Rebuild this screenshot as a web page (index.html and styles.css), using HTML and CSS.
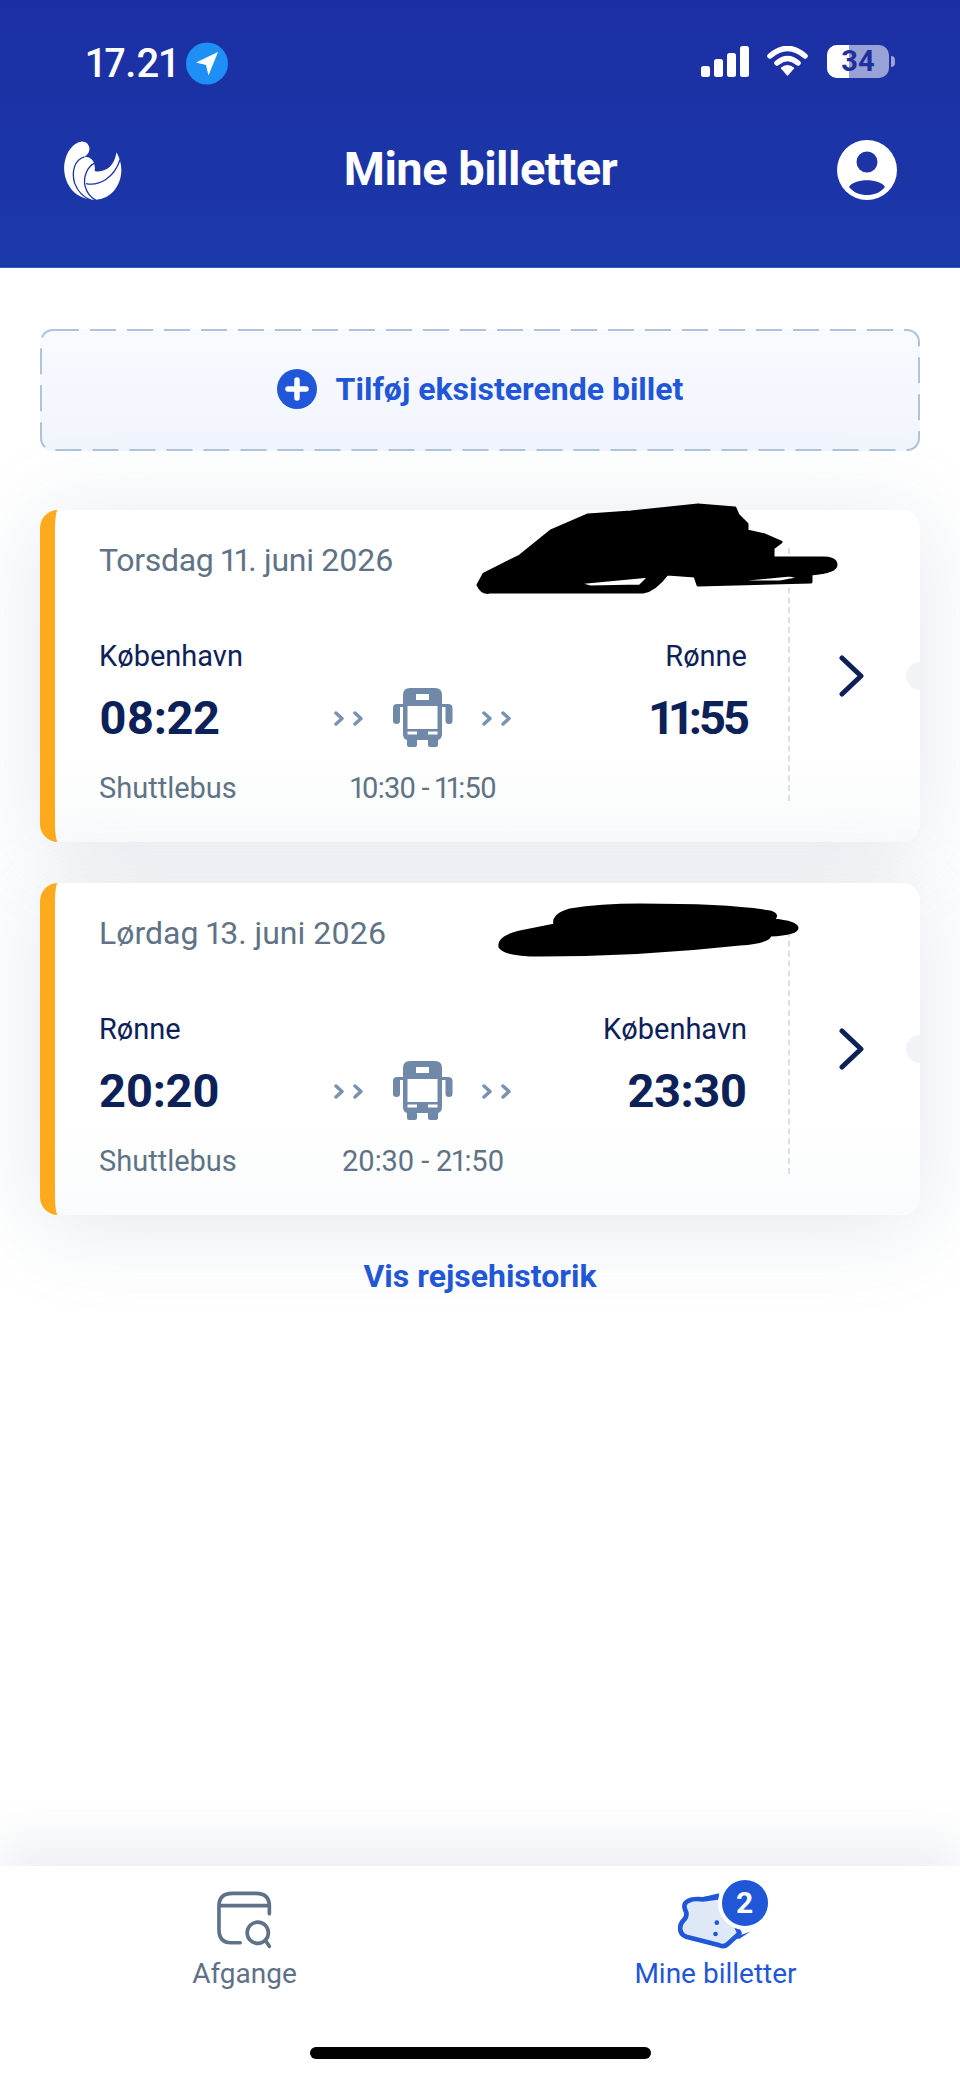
FILE: index.html
```html
<!DOCTYPE html>
<html lang="da">
<head>
  <meta charset="UTF-8">
  <title>Mine billetter</title>
  <link rel="stylesheet" href="styles.css">
</head>
<body>
<div class="app">
  <header class="top">
    <div class="status">
      <div class="clock">
        <span>17.21</span>
        <svg class="loc" viewBox="0 0 42 42"><circle cx="21" cy="21" r="21" fill="#1e90f5"/><path d="M32 9.500 L10 20 L20 22.500 L22.500 33 Z" fill="#fff"/></svg>
      </div>
      <div class="sys">
        <svg class="signal" viewBox="0 0 48 31"><rect x="0" y="20" width="9" height="11" rx="2.500"/><rect x="13" y="13" width="9" height="18" rx="2.500"/><rect x="26" y="7" width="9" height="24" rx="2.500"/><rect x="39" y="0" width="9" height="31" rx="2.500"/></svg>
        <svg class="wifi" viewBox="0 0 41 30"><path d="M3 10 Q20.500 -5 38 10" fill="none" stroke="#fff" stroke-width="5.500" stroke-linecap="round"/><path d="M10 17 Q20.500 8 31 17" fill="none" stroke="#fff" stroke-width="5.500" stroke-linecap="round"/><path d="M13.500 22 Q20.500 16 27.500 22 L20.500 30 Z" fill="#fff"/></svg>
        <div class="batt"><div class="batt-fill"></div><span>34</span></div>
        <div class="batt-nub"></div>
      </div>
    </div>
    <div class="bar">
      <svg class="logo" viewBox="70 55 185 185">
        <path d="M125 60 C145 58 155 78 148 92 C144 100 138 103 135 106 C155 105 170 120 166 150 C195 152 225 140 232 92 C252 125 255 175 222 212 C195 240 150 245 115 222 C80 200 65 150 78 110 C85 85 105 62 125 60 Z" fill="#fff"/>
        <path d="M135 106 C105 115 95 150 105 185 C115 212 135 230 155 237 M166 125 C145 135 130 165 137 195 C142 215 155 230 170 238 M140 187 C180 195 225 170 243 115" fill="none" stroke="#1c34a6" stroke-width="4"/>
      </svg>
      <h1>Mine billetter</h1>
      <svg class="profile" viewBox="0 0 60 60">
        <circle cx="30" cy="30" r="30" fill="#fff"/>
        <circle cx="30" cy="22" r="10.500" fill="#1c34a6"/>
        <path d="M12 47 C17 38 43 38 48 47 C43 53 37 55 30 55 C23 55 17 53 12 47 Z" fill="#1c34a6"/>
      </svg>
    </div>
  </header>

  <main class="content">
    <button class="add">
      <svg class="dashes" viewBox="0 0 880 122"><rect x="1" y="1" width="878" height="120" rx="12"/></svg>
      <svg class="plus" viewBox="0 0 40 40"><circle cx="20" cy="20" r="20" fill="#1f57d8"/><path d="M20 11 V29 M11 20 H29" stroke="#fff" stroke-width="5.500" stroke-linecap="round"/></svg>
      <span>Tilføj eksisterende billet</span>
    </button>

    <article class="ticket">
      <div class="ticket-main">
        <div class="date">Torsdag 11. juni 2026</div>
        <div class="route">
          <div class="place">København</div>
          <div class="place right">Rønne</div>
          <div class="time">08:22</div>
          <div class="trip">
            <svg class="chev" viewBox="0 0 30 15"><path d="M2 2 L8 7.500 L2 13 M21 2 L27 7.500 L21 13"/></svg>
            <svg class="bus" viewBox="0 0 60 60"><use href="#bus-shape"/></svg>
            <svg class="chev" viewBox="0 0 30 15"><path d="M2 2 L8 7.500 L2 13 M21 2 L27 7.500 L21 13"/></svg>
          </div>
          <div class="time right tight">11:55</div>
          <div class="sub">Shuttlebus</div>
          <div class="sub mid tight">10:30 - 11:50</div>
        </div>
      </div>
      <div class="stub">
        <svg class="go" viewBox="0 0 26 42"><path d="M3 3 L22 21 L3 39"/></svg>
      </div>
      <div class="notch"></div>
      <svg class="scribble first" viewBox="470 500 375 100">
        <path fill-rule="evenodd" d="M478 585 Q482 594 490 592 L643 592 Q655 590 667 574 L695 576 L698 585 L811 582 L811 574 Q836 572 836 565 Q836 557 820 558 L773 558 L773 548 L781 542 L765 535 L747 531 L747 524 L738 515 L735 508 L698 505 L631 512 L588 515 L551 531 L520 556 L484 574 Z M576 583 L650 576 L640 586 L590 587 Z M716 582 L790 575 L802 578 L780 582 Z"/>
      </svg>
    </article>

    <article class="ticket">
      <div class="ticket-main">
        <div class="date wide">Lørdag 13. juni 2026</div>
        <div class="route">
          <div class="place">Rønne</div>
          <div class="place right">København</div>
          <div class="time">20:20</div>
          <div class="trip">
            <svg class="chev" viewBox="0 0 30 15"><path d="M2 2 L8 7.500 L2 13 M21 2 L27 7.500 L21 13"/></svg>
            <svg class="bus" viewBox="0 0 60 60"><use href="#bus-shape"/></svg>
            <svg class="chev" viewBox="0 0 30 15"><path d="M2 2 L8 7.500 L2 13 M21 2 L27 7.500 L21 13"/></svg>
          </div>
          <div class="time right">23:30</div>
          <div class="sub">Shuttlebus</div>
          <div class="sub mid">20:30 - 21:50</div>
        </div>
      </div>
      <div class="stub">
        <svg class="go" viewBox="0 0 26 42"><path d="M3 3 L22 21 L3 39"/></svg>
      </div>
      <div class="notch"></div>
      <svg class="scribble second" viewBox="490 893 320 70">
        <path d="M500 947 Q498 937 520 932 L555 925 Q552 915 570 910 Q600 905 640 905 Q730 905 770 912 Q780 915 772 920 Q797 922 797 928 Q797 934 770 935 Q770 942 740 944 Q640 955 540 955 Q505 955 500 947 Z"/>
      </svg>
    </article>

    <a class="history">Vis rejsehistorik</a>
  </main>

  <nav class="tabs">
    <div class="tab-row">
      <div class="tab">
        <svg class="tab-icon" viewBox="70 50 190 190" fill="none" stroke="#5e7187" stroke-width="11" stroke-linecap="round">
          <path d="M240 128 V105 Q240 66 200 66 H128 Q88 66 88 105 V175 Q88 215 125 215 H152 M88 103 H240"/>
          <circle cx="205" cy="185" r="32"/>
          <path d="M228 208 L240 226"/>
        </svg>
        <span>Afgange</span>
      </div>
      <div class="tab active">
        <div class="tab-icon wrap-badge">
          <svg viewBox="50 60 230 180" class="ticket-icon">
            <path d="M88 92 Q100 85 130 88 L190 80 L240 190 L205 222 Q195 232 180 226 L80 200 Q62 194 62 175 Q62 160 75 148 Q85 135 78 122 Q68 100 88 92 Z" fill="#dfe8f6" stroke="#1f57d8" stroke-width="14" stroke-linejoin="round"/>
            <path d="M120 84 L178 70 L178 84 Z M212 206 L272 185 L240 206 Z" fill="#1f57d8"/>
            <circle cx="172" cy="158" r="7" fill="#1f57d8"/><circle cx="168" cy="192" r="7" fill="#1f57d8"/>
          </svg>
          <div class="badge">2</div>
        </div>
        <span>Mine billetter</span>
      </div>
    </div>
    <div class="home"></div>
  </nav>
</div>

<svg class="defs" width="0" height="0">
  <symbol id="bus-shape" viewBox="0 0 60 60">
    <path fill="#7089a9" fill-rule="evenodd" d="M17 0 H42 Q49 0 49 7 V16 H55 Q59.500 16 59.500 20 V33 Q59.500 36 56 36 Q52.500 36 52.500 33 V19 H49 V46 Q49 51 45 52 V57 Q45 59 43 59 H37 Q35 59 35 57 V52 H24 V57 Q24 59 22 59 H16 Q14 59 14 57 V52 Q10 51 10 46 V19 H7 V33 Q7 36 3.500 36 Q0 36 0 33 V20 Q0 16 4 16 H10 V7 Q10 0 17 0 Z M14.500 18 V41 H44.500 V18 Z M23 6 V12 H36 V6 Z M14.500 43.500 V46.500 H24 V43.500 Z M35 43.500 V46.500 H44.500 V43.500 Z"/>
  </symbol>
</svg>
</body>
</html>
```

FILE: styles.css
```css
*{margin: 0;padding: 0;box-sizing: border-box;}
html,body{height: 100%;}
body{font-family: Roboto, "Noto Sans", sans-serif;background: #fff;color: #0d2159;font-variant-numeric: proportional-nums;}
.app{width: 960px;height: 2078px;display: flex;flex-direction: column;overflow: hidden;}
.defs{position: absolute;}

/* blue top */
.top{height: 268px;background: linear-gradient(#1b2fa3, #1b38a9);color: #fff;flex: none;border-bottom: 1px solid #2a62b8;}
.status{height: 139px;display: flex;justify-content: space-between;align-items: flex-start;padding: 42px 65px 0 86px;}
.clock{display: flex;align-items: center;gap: 8px;height: 43px;font-size: 40px;font-weight: 500;}
.loc{width: 42px;height: 43px;}
.sys{display: flex;align-items: center;height: 38px;}
.signal{width: 48px;height: 31px;fill: #fff;margin-right: 18px;}
.wifi{width: 41px;height: 30px;margin-right: 19px;}
.batt{position: relative;width: 62px;height: 33px;border-radius: 10px;background: rgba(255,255,255,.55);overflow: hidden;text-align: center;font-size: 29px;font-weight: 700;line-height: 33px;color: #1f2f9c;}
.batt-fill{position: absolute;left: 0;top: 0;bottom: 0;width: 22px;background: #fff;}
.batt span{position: relative;}
.batt-nub{width: 4px;height: 11px;margin-left: 2px;background: rgba(255,255,255,.55);border-radius: 0 4px 4px 0;}
.bar{display: flex;justify-content: space-between;align-items: center;padding: 0 63px;height: 62px;}
.bar h1{font-size: 47px;font-weight: 700;letter-spacing: -0.5px;margin-bottom: 4px;}
.logo{width: 61px;height: 61px;}
.profile{width: 60px;height: 60px;}

/* list */
.content{flex: 1;padding: 61px 40px 0;display: flex;flex-direction: column;}
.add{position: relative;height: 122px;border: 0;border-radius: 12px;background: linear-gradient(#f8faff, #f1f5fc);display: flex;align-items: center;justify-content: center;gap: 19px;color: #1f57d8;font: 700 32px Roboto, sans-serif;margin-bottom: 59px;padding-bottom: 2px;}
.dashes{position: absolute;left: 0;top: 0;width: 880px;height: 122px;fill: none;stroke: #aec3dc;stroke-width: 2;stroke-dasharray: 26 11;}
.plus{width: 40px;height: 40px;}
.ticket{position: relative;height: 332px;margin-bottom: 41px;background: linear-gradient(#fff 70%, #fafbfc);border-left: 15px solid #fdab1c;border-radius: 18px;display: flex;box-shadow: 0 10px 90px rgba(115,135,165,.2);}
.ticket-main{width: 733px;padding: 30px 0 0 44px;}
.date{font-size: 32px;letter-spacing: -0.3px;color: #5f7386;height: 98px;line-height: 40px;}
.date.wide{letter-spacing: 0;}
.route{width: 648px;display: grid;grid-template-columns: 1fr auto 1fr;align-items: start;}
.place{font-size: 29px;height: 36px;line-height: 36px;}
.place.right{grid-column: 3;text-align: right;}
.time{font-size: 47px;font-weight: 700;letter-spacing: -0.5px;height: 96px;line-height: 88px;}
.time.right{text-align: right;}
.time.tight{letter-spacing: -3px;}
.trip{display: flex;align-items: center;gap: 29px;height: 88px;}
.chev{width: 30px;height: 15px;fill: none;stroke: #7a93b2;stroke-width: 3.500;stroke-linecap: round;stroke-linejoin: round;}
.bus{width: 60px;height: 60px;}
.sub{font-size: 29px;color: #5f7386;height: 36px;line-height: 36px;}
.sub.mid{text-align: center;letter-spacing: -0.2px;}
.sub.mid.tight{letter-spacing: -0.9px;}
.stub{flex: 1;display: flex;align-items: center;padding-left: 51px;position: relative;}
.stub::before{content: "";position: absolute;left: 0;top: 38px;bottom: 41px;border-left: 2px dashed #d9dfe8;}
.go{width: 26px;height: 42px;fill: none;stroke: #0d2159;stroke-width: 5;stroke-linecap: round;stroke-linejoin: round;}
.notch{position: absolute;right: 0;top: 152px;width: 14px;height: 28px;border-radius: 14px 0 0 14px;background: #f1f3f6;}
.scribble{position: absolute;fill: #000;stroke: #000;stroke-width: 3;stroke-linejoin: round;}
.scribble.first{left: 415px;top: -10px;width: 375px;height: 100px;}
.scribble.second{left: 435px;top: 10px;width: 320px;height: 70px;}
.history{align-self: center;color: #1f57d8;font-size: 32px;font-weight: 700;margin-top: 1px;}

/* bottom tabs */
.tabs{flex: none;height: 212px;background: #fff;display: flex;flex-direction: column;box-shadow: 0 -24px 44px rgba(130,145,170,.14);position: relative;}
.tab-row{display: grid;grid-template-columns: 471px 471px;padding-left: 9px;padding-top: 22px;flex: 1;}
.tab{display: flex;flex-direction: column;align-items: center;color: #5e7187;font-size: 28px;gap: 6px;}
.tab.active{color: #1f57d8;}
.tab-icon{width: 63px;height: 63px;}
.wrap-badge{position: relative;width: 76px;}
.ticket-icon{position: absolute;left: -2px;top: 2px;width: 77px;height: 60px;}
.badge{position: absolute;left: 40px;top: -12px;width: 54px;height: 54px;border: 4px solid #fff;border-radius: 50%;background: #1f57d8;color: #fff;font-size: 30px;font-weight: 700;text-align: center;line-height: 46px;}
.home{width: 341px;height: 12px;margin: 0 auto 19px;background: #000;border-radius: 6px;}
```
